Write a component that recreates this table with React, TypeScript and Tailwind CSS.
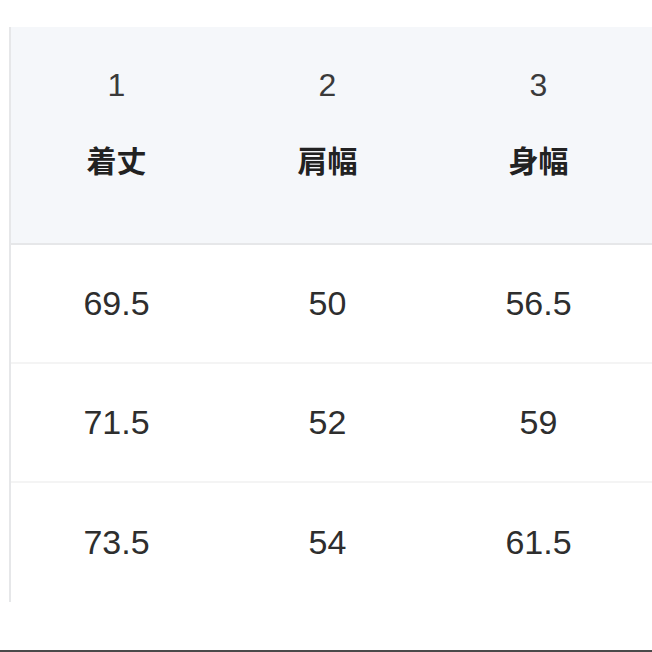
const headers = [
  { no: "1", label: "着丈" },
  { no: "2", label: "肩幅" },
  { no: "3", label: "身幅" },
];

const rows = [
  ["69.5", "50", "56.5"],
  ["71.5", "52", "59"],
  ["73.5", "54", "61.5"],
];

const num = { fontFamily: '"Liberation Sans", Arial, sans-serif' };
const jp = { fontFamily: '"Noto Sans CJK JP", "Noto Sans", sans-serif' };

const App = () => {
  return (
    <div className="w-[652px] h-[652px] bg-white flex flex-col overflow-hidden">
      <div className="pt-[27px] pl-[9px]">
        <div className="border-l-2 border-[#e6e7e9] w-[643px]">
          <div className="flex h-[218px] bg-[#f5f7fa] border-b-2 border-[#e6e7e9]">
            {headers.map((h) => (
              <div key={h.no} className="w-[211px] shrink-0 flex flex-col items-center pt-[38px]">
                <div className="h-[40px] leading-[40px] text-[32px] text-[#3a3a3a]" style={num}>{h.no}</div>
                <div className="mt-[34px] h-[40px] leading-[40px] text-[30px] font-bold text-[#222]" style={jp}>{h.label}</div>
              </div>
            ))}
            <div className="flex-1" />
          </div>
          {rows.map((r, i) => (
            <div key={i} className={`flex h-[119px] items-center ${i < rows.length - 1 ? "border-b-2 border-[#f4f4f4]" : ""}`}>
              {r.map((v, j) => (
                <div key={j} className="w-[211px] shrink-0 text-center text-[34px] text-[#2e2e2e]" style={num}>{v}</div>
              ))}
            </div>
          ))}
        </div>
      </div>
      <div className="flex-1" />
      <div className="h-[2px] bg-[#4a4a4a]" />
    </div>
  );
};

export default App;
